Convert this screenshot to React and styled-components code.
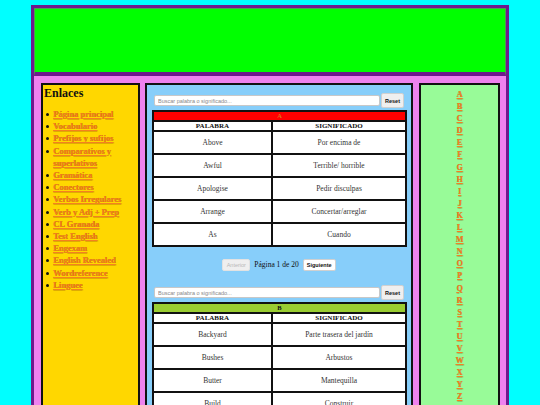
import React from "react"
import styled, { createGlobalStyle } from "styled-components"

const GlobalStyle = createGlobalStyle`
  html, body {
    margin: 0;
    padding: 0;
    background: #00ffff;
    font-family: "Liberation Serif", "Times New Roman", serif;
  }
`;

const Wrapper = styled.div`
  width: 478px;
  box-sizing: border-box;
  margin: 5px auto 0;
  border: 3px solid #6e1a8c;
  border-bottom: none;
  background: #ee82ee;
`;

const Header = styled.header`
  box-sizing: border-box;
  height: 68px;
  background: #00ff00;
  border: 1px solid #4f9a55;
  border-bottom: 4px solid #6e1a8c;
`;

const Main = styled.div`
  display: flex;
  align-items: stretch;
  gap: 5px;
  padding: 7px 6px 0 7px;
  min-height: 330px;
`;

const Column = styled.aside`
  box-sizing: border-box;
  width: ${(p) => p.$w}px;
  flex: none;
  padding: ${(p) => p.$pad || 0};
  margin-left: ${(p) => p.$ml || 0}px;
  background: ${(p) => p.$bg};
  border: 2px solid #111;
  border-bottom: none;
`;

const LinksTitle = styled.h2`
  margin: 2px 0 0;
  font-size: 12px;
  line-height: 12px;
  font-weight: bold;
  color: #111;
`;

const LinkList = styled.ul`
  margin: 9px 0 0;
  padding-left: 2px;
  list-style: none;
  font-size: 8.5px;
  line-height: 12.2px;
  font-weight: bold;
`;

const LinkItem = styled.li`
  display: flex;
  align-items: flex-start;
  gap: 4px;
  &::before {
    content: "";
    flex: none;
    width: 3px;
    height: 3px;
    margin-top: 5px;
    border-radius: 50%;
    background: #111;
  }
`;

const Link = styled.a`
  color: #f5801f;
  text-decoration: underline;
  text-shadow: 0.4px 0.4px 0.6px rgba(140, 60, 10, 0.7);
`;

const Section = styled.section`
  padding: 8px 0 0;
`;

const SearchRow = styled.div`
  display: flex;
  align-items: center;
  gap: 1px;
  margin: 0 7px;
`;

const SearchInput = styled.input`
  flex: 1;
  height: 11px;
  box-sizing: border-box;
  border: 1px solid #c8c8c8;
  border-radius: 2px;
  padding: 0 3px;
  font-family: "Liberation Sans", Arial, sans-serif;
  font-size: 5.5px;
  background: #fff;
  &::placeholder {
    color: #888;
  }
`;

const SmallButton = styled.button`
  height: ${(p) => p.$h || 12}px;
  width: ${(p) => p.$w}px;
  padding: 0;
  box-sizing: border-box;
  border: 1px solid ${(p) => (p.disabled ? "#e2e2e2" : "#d0d0d0")};
  border-radius: 2px;
  background: ${(p) => (p.$light ? "#ffffff" : "#efefef")};
  color: ${(p) => (p.disabled ? "#b8b8b8" : "#111")};
  font-family: "Liberation Sans", Arial, sans-serif;
  font-size: 5.5px;
  font-weight: ${(p) => (p.disabled ? "normal" : "bold")};
`;

const Table = styled.table`
  width: 255px;
  margin: 2px 0 0 5px;
  border-collapse: collapse;
  border: 2px solid #111;
  background: #fff;
  color: #333;
`;

const LetterCell = styled.th`
  height: 8px;
  padding: 0;
  background: ${(p) => p.$bg};
  border: 2px solid #111;
  font-size: 6.5px;
  line-height: 6px;
  color: ${(p) => p.$fg};
`;

const HeadCell = styled.th`
  width: ${(p) => p.$w || "auto"};
  height: 8px;
  padding: 0;
  border: 2px solid #111;
  font-size: 7px;
  line-height: 7px;
  font-weight: bold;
  color: #111;
`;

const Cell = styled.td`
  height: 21px;
  padding: 0;
  border: 2px solid #111;
  font-size: 7.5px;
  text-align: center;
`;

const Pager = styled.div`
  display: flex;
  justify-content: center;
  align-items: center;
  gap: 4px;
  margin: 12px 0 6px;
  font-size: 7.5px;
  line-height: 12px;
  color: #111;
`;

const Letters = styled.div`
  display: flex;
  flex-direction: column;
  align-items: center;
  padding-top: 4px;
  font-size: 8px;
  line-height: 12.1px;
  font-weight: bold;
`;

const links = [
  "Página principal",
  "Vocabulario",
  "Prefijos y sufijos",
  "Comparativos y superlativos",
  "Gramática",
  "Conectores",
  "Verbos Irregulares",
  "Verb y Adj + Prep",
  "CL Granada",
  "Test English",
  "Engexam",
  "English Revealed",
  "Wordreference",
  "Linguee",
];

const sections = [
  {
    letter: "A",
    bg: "#ff0000",
    fg: "#e0701a",
    rows: [
      ["Above", "Por encima de"],
      ["Awful", "Terrible/ horrible"],
      ["Apologise", "Pedir disculpas"],
      ["Arrange", "Concertar/arreglar"],
      ["As", "Cuando"],
    ],
  },
  {
    letter: "B",
    bg: "#9acd32",
    fg: "#111",
    rows: [
      ["Backyard", "Parte trasera del jardín"],
      ["Bushes", "Arbustos"],
      ["Butter", "Mantequilla"],
      ["Build", "Construir"],
      ["Bring", "Traer"],
    ],
  },
];

const alphabet = "ABCDEFGHIJKLMNOPQRSTUVWXYZ".split("");

function WordSection({ section }) {
  return (
    <Section>
      <SearchRow>
        <SearchInput placeholder="Buscar palabra o significado..." />
        <SmallButton $w={23} $h={15}>Reset</SmallButton>
      </SearchRow>
      <Table>
        <thead>
          <tr>
            <LetterCell colSpan={2} $bg={section.bg} $fg={section.fg}>
              {section.letter}
            </LetterCell>
          </tr>
          <tr>
            <HeadCell $w="117px">PALABRA</HeadCell>
            <HeadCell>SIGNIFICADO</HeadCell>
          </tr>
        </thead>
        <tbody>
          {section.rows.map(([word, meaning]) => (
            <tr key={word}>
              <Cell>{word}</Cell>
              <Cell>{meaning}</Cell>
            </tr>
          ))}
        </tbody>
      </Table>
      <Pager>
        <SmallButton $w={28} disabled>Anterior</SmallButton>
        <span>Página 1 de 20</span>
        <SmallButton $w={33} $light>Siguiente</SmallButton>
      </Pager>
    </Section>
  );
}

export default function App() {
  return (
    <>
      <GlobalStyle />
      <Wrapper>
        <Header />
        <Main>
          <Column $w={99} $bg="#ffd700" $pad="0 1px">
            <LinksTitle>Enlaces</LinksTitle>
            <LinkList>
              {links.map((l) => (
                <LinkItem key={l}>
                  <Link href="#">{l}</Link>
                </LinkItem>
              ))}
            </LinkList>
          </Column>
          <Column $w={268} $bg="#87cefa">
            {sections.map((s) => (
              <WordSection key={s.letter} section={s} />
            ))}
          </Column>
          <Column $w={81} $bg="#98fb98" $ml={1}>
            <Letters>
              {alphabet.map((c) => (
                <Link key={c} href="#">{c}</Link>
              ))}
            </Letters>
          </Column>
        </Main>
      </Wrapper>
    </>
  );
}
